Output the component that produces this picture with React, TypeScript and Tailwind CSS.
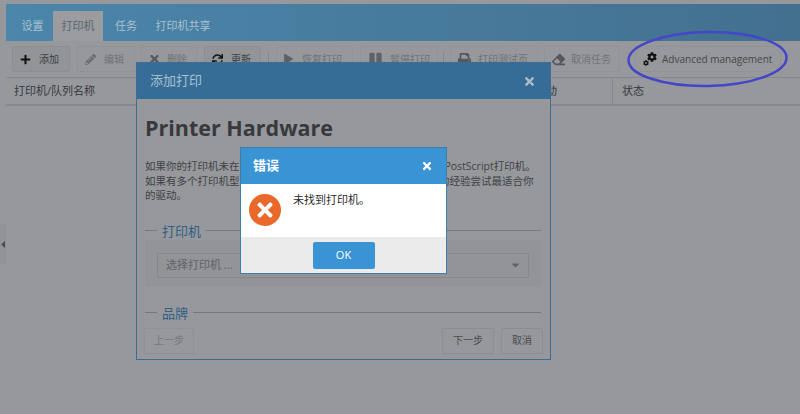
import { FaPlus, FaPencilAlt, FaTimes, FaSync, FaPlay, FaPause, FaPrint, FaEraser, FaCog, FaCaretDown, FaCaretLeft } from "react-icons/fa";
import type { ReactNode } from "react";

function ToolButton({ icon, label, on, className }: { icon: ReactNode; label: string; on?: boolean; className: string }) {
  return (
    <div
      className={`flex h-[26px] shrink-0 items-center whitespace-nowrap rounded-[2px] border pl-[7px] text-[10px] ${
        on ? "border-[#8b8d91] bg-[#929498] text-[#3d3f42]" : "border-[#909296] text-[#707276]"
      } ${className}`}
    >
      {icon}
      <span>{label}</span>
    </div>
  );
}

export default function App() {
  return (
    <div className="relative h-[414px] w-[800px] overflow-hidden bg-[#96989c] font-['Open_Sans','Noto_Sans_CJK_SC',sans-serif] text-[#37393c]">
      {/* page behind the dialogs */}
      <div className="flex h-full flex-col pl-[6px] pt-[4px]">
        <div className="flex h-[37px] shrink-0 items-end bg-gradient-to-r from-[#4b86ab] to-[#43708f] pl-[6px] text-[11px] text-[#a9c0d0]">
          <div className="flex h-[30px] w-[41px] items-center justify-center">设置</div>
          <div className="flex h-[30px] w-[50px] items-center justify-center bg-[#9a9c9f] text-[#5c6670]">打印机</div>
          <div className="flex h-[30px] w-[46px] items-center justify-center">任务</div>
          <div className="flex h-[30px] w-[68px] items-center justify-center">打印机共享</div>
        </div>
        <div className="flex h-[36px] shrink-0 items-center pl-[6px]">
          <ToolButton on className="w-[58px]" icon={<FaPlus className="mr-[8px] h-[11px] w-[11px] text-[#111]" />} label="添加" />
          <ToolButton className="ml-[7px] w-[58px]" icon={<FaPencilAlt className="mr-[8px] h-[11px] w-[11px] text-[#6a6c70]" />} label="编辑" />
          <ToolButton className="ml-[6px] w-[56px]" icon={<FaTimes className="mr-[7px] h-[12px] w-[11px] text-[#54575b]" />} label="删除" />
          <ToolButton on className="ml-[7px] w-[57px]" icon={<FaSync className="mr-[8px] h-[11px] w-[11px] text-[#111]" />} label="更新" />
          <div className="ml-[7px] h-[14px] w-px bg-[#84868a]" />
          <ToolButton className="ml-[7px] w-[77px]" icon={<FaPlay className="mr-[9px] h-[10px] w-[9px] text-[#5f6165]" />} label="恢复打印" />
          <ToolButton className="ml-[7px] w-[78px]" icon={<FaPause className="mr-[7px] h-[14px] w-[15px] text-[#5f6165]" />} label="暂停打印" />
          <div className="ml-[5px] h-[14px] w-px bg-[#84868a]" />
          <ToolButton className="ml-[6px] w-[88px]" icon={<FaPrint className="mr-[7px] h-[13px] w-[13px] text-[#54575b]" />} label="打印测试页" />
          <ToolButton className="ml-[6px] w-[76px]" icon={<FaEraser className="mr-[6px] h-[13px] w-[13px] text-[#54575b]" />} label="取消任务" />
          <ToolButton
            className="ml-[15px] w-[146px] !text-[#45474b]"
            icon={
              <span className="relative mr-[5px] h-[14px] w-[14px] shrink-0">
                <FaCog className="absolute right-0 top-0 h-[10px] w-[10px] text-[#111]" />
                <FaCog className="absolute bottom-0 left-0 h-[6px] w-[6px] text-[#111]" />
              </span>
            }
            label="Advanced management"
          />
        </div>
        <div className="flex h-[29px] shrink-0 items-center border-b-2 border-t border-[#85878b] text-[11px]">
          <div className="w-[466px] pl-[8px]">打印机/队列名称</div>
          <div className="flex h-full w-[141px] items-center justify-end border-r border-[#85878b] pr-[55px]">动</div>
          <div className="pl-[9px]">状态</div>
        </div>
      </div>

      {/* collapse handle on the left edge */}
      <div className="absolute left-0 top-[224px] flex h-[40px] w-[6px] items-center bg-[#919397]">
        <FaCaretLeft className="h-[11px] w-[6px] text-[#4a4c4f]" />
      </div>

      {/* add printer dialog */}
      <div className="absolute left-[136px] top-[62px] flex h-[298px] w-[415px] flex-col border border-[#3f6d92] bg-[#96989c]">
        <div className="flex h-[36px] shrink-0 items-center justify-between bg-[#366d96] pl-[13px] pr-[15px] text-[13px] text-[#a9c0d0]">
          <span>添加打印</span>
          <FaTimes className="h-[13px] w-[11px] text-[#a9bccb]" />
        </div>
        <div className="flex flex-1 flex-col pl-[8px] pr-[7px]">
          <div className="mt-[14px] whitespace-nowrap text-[21.5px] font-bold leading-[30px] text-[#37393c]">Printer Hardware</div>
          <p className="mt-[16px] whitespace-pre text-[10.5px] leading-[14.5px] text-[#3f4144]">
            {"如果你的打印机未在列表中，请选择一个通用驱动，比如通用的  PostScript打印机。"}
            <br />
            如果有多个打印机型号可选，请选择最接近的型号，或者根据您的经验尝试最适合你
            <br />
            的驱动。
          </p>
          <div className="mr-[2px] mt-[19px] flex items-center gap-[5px] text-[13px] leading-[18px] text-[#2f5f85]">
            <span className="h-px w-[12px] bg-[#75787c]" />
            <span>打印机</span>
            <span className="h-px flex-1 bg-[#75787c]" />
          </div>
          <div className="mr-[2px] bg-[#929498] px-[12px] pb-[9px] pt-[13px]">
            <div className="flex h-[25px] items-center justify-between border border-[#85878b] pl-[8px] pr-[7px] text-[11px] text-[#606266]">
              <span>选择打印机 ...</span>
              <FaCaretDown className="h-[12px] w-[11px] text-[#606266]" />
            </div>
          </div>
          <div className="mr-[2px] mt-[17px] flex items-center gap-[5px] text-[13px] leading-[18px] text-[#2f5f85]">
            <span className="h-px w-[12px] bg-[#75787c]" />
            <span>品牌</span>
            <span className="h-px flex-1 bg-[#75787c]" />
          </div>
          <div className="-ml-px mt-[6px] flex items-center justify-between text-[10px]">
            <div className="flex h-[26px] w-[50px] items-center justify-center rounded-[2px] border border-[#8f9195] text-[#75777b]">上一步</div>
            <div className="flex gap-[7px] text-[#4a4c4f]">
              <div className="flex h-[26px] w-[52px] items-center justify-center rounded-[2px] border border-[#8b8d91]">下一步</div>
              <div className="flex h-[26px] w-[42px] items-center justify-center rounded-[2px] border border-[#8b8d91]">取消</div>
            </div>
          </div>
        </div>
      </div>

      {/* error dialog */}
      <div className="absolute left-[240px] top-[147px] flex h-[127px] w-[207px] flex-col border border-[#3f7dad] bg-white">
        <div className="flex h-[36px] shrink-0 items-center justify-between bg-[#3a93d3] pl-[12px] pr-[14px] text-[13px] font-semibold text-white">
          <span>错误</span>
          <FaTimes className="h-[12px] w-[10px] text-white" />
        </div>
        <div className="flex h-[53px] shrink-0 items-start gap-[12px] pl-[8px] pt-[10px]">
          <div className="flex h-[32px] w-[32px] items-center justify-center rounded-full bg-[#e9682a]">
            <FaTimes className="h-[22px] w-[18px] text-white" />
          </div>
          <span className="-mt-[2px] text-[11px] leading-[15px] text-[#2b2b2b]">未找到打印机。</span>
        </div>
        <div className="flex flex-1 items-center justify-center bg-[#ebebeb]">
          <div className="flex h-[27px] w-[62px] items-center justify-center rounded-[2px] bg-[#3a93d3] text-[11px] text-white">OK</div>
        </div>
      </div>

      {/* hand-drawn annotation around the button */}
      <svg className="absolute left-[620px] top-[25px]" width="175" height="70" viewBox="0 0 175 70">
        <ellipse cx="87.5" cy="34" rx="79" ry="27" fill="none" stroke="#4346c8" strokeWidth="2.5" transform="rotate(-1 87 34)" />
      </svg>
    </div>
  );
}
